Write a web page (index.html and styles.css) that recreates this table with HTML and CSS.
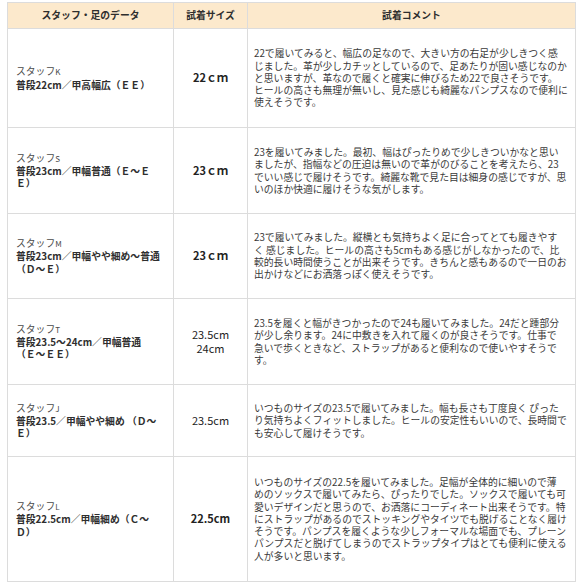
FILE: index.html
```html
<!DOCTYPE html>
<html lang="ja">
<head>
<meta charset="utf-8">
<link rel="stylesheet" href="styles.css">
</head>
<body>
<table class="fit-table">
  <colgroup>
    <col class="c-staff">
    <col class="c-size">
    <col class="c-comment">
  </colgroup>
  <thead>
    <tr class="head">
      <th>スタッフ・足のデータ</th>
      <th>試着サイズ</th>
      <th>試着コメント</th>
    </tr>
  </thead>
  <tbody>
    <tr class="r1">
      <td class="staff"><span class="name">スタッフ<span class="init">K</span></span><br><span class="foot">普段22cm／甲高幅広（ＥＥ）</span></td>
      <td class="size bold">22ｃｍ</td>
      <td class="comment">22で履いてみると、幅広の足なので、大きい方の右足が少しきつく感<br>じました。革が少しカチッとしているので、足あたりが固い感じなのか<br>と思いますが、革なので履くと確実に伸びるため22で良さそうです。<br>ヒールの高さも無理が無いし、見た感じも綺麗なパンプスなので便利に<br>使えそうです。</td>
    </tr>
    <tr class="r2">
      <td class="staff"><span class="name">スタッフ<span class="init">S</span></span><br><span class="foot">普段23cm／甲幅普通（Ｅ～Ｅ<br>Ｅ）</span></td>
      <td class="size bold">23ｃｍ</td>
      <td class="comment">23を履いてみました。最初、幅はぴったりめで少しきついかなと思い<br>ましたが、指幅などの圧迫は無いので革がのびることを考えたら、23<br>でいい感じで履けそうです。綺麗な靴で見た目は細身の感じですが、思<br>いのほか快適に履けそうな気がします。</td>
    </tr>
    <tr class="r3">
      <td class="staff"><span class="name">スタッフ<span class="init">M</span></span><br><span class="foot">普段23cm／甲幅やや細め～普通<br>（Ｄ～Ｅ）</span></td>
      <td class="size bold">23ｃｍ</td>
      <td class="comment">23で履いてみました。縦横とも気持ちよく足に合ってとても履きやす<br>く 感じました。ヒールの高さも5cmもある感じがしなかったので、比<br>較的長い時間使うことが出来そうです。きちんと感もあるので一日のお<br>出かけなどにお洒落っぽく使えそうです。</td>
    </tr>
    <tr class="r4">
      <td class="staff"><span class="name">スタッフ<span class="init">T</span></span><br><span class="foot">普段23.5～24cm／甲幅普通<br>（Ｅ～ＥＥ）</span></td>
      <td class="size">23.5cm<br>24cm</td>
      <td class="comment">23.5を履くと幅がきつかったので24も履いてみました。24だと踵部分<br>が少し余ります。24に中敷きを入れて履くのが良さそうです。仕事で<br>急いで歩くときなど、ストラップがあると便利なので使いやすそうで<br>す。</td>
    </tr>
    <tr class="r5">
      <td class="staff"><span class="name">スタッフ<span class="init">J</span></span><br><span class="foot">普段23.5／甲幅やや細め （Ｄ～<br>Ｅ）</span></td>
      <td class="size">23.5cm</td>
      <td class="comment">いつものサイズの23.5で履いてみました。幅も長さも丁度良く ぴった<br>り気持ちよくフィットしました。ヒールの安定性もいいので、長時間で<br>も安心して履けそうです。</td>
    </tr>
    <tr class="r6">
      <td class="staff"><span class="name">スタッフ<span class="init">L</span></span><br><span class="foot">普段22.5cm／甲幅細め（Ｃ～<br>Ｄ）</span></td>
      <td class="size bold">22.5cm</td>
      <td class="comment">いつものサイズの22.5を履いてみました。足幅が全体的に細いので薄<br>めのソックスで履いてみたら、ぴったりでした。ソックスで履いても可<br>愛いデザインだと思うので、お洒落にコーディネート出来そうです。特<br>にストラップがあるのでストッキングやタイツでも脱げることなく履け<br>そうです。パンプスを履くような少しフォーマルな場面でも、プレーン<br>パンプスだと脱げてしまうのでストラップタイプはとても便利に使える<br>人が多いと思います。</td>
    </tr>
  </tbody>
</table>
</body>
</html>
```

FILE: styles.css
```css
html, body {
  margin: 0;
  padding: 0;
  background: #ffffff;
}

body {
  font-family: "Noto Sans CJK JP", "Noto Sans", sans-serif;
  color: #3a3a3a;
}

.fit-table {
  margin: 2px 0 0 7px;
  width: 568px;
  border-collapse: collapse;
  table-layout: fixed;
  font-size: 9.8px;
  line-height: 12.3px;
}

.c-staff { width: 166px; }
.c-size { width: 74px; }
.c-comment { width: 328px; }

.fit-table th,
.fit-table td {
  border: 1px solid #dcdcdc;
  padding: 0;
  vertical-align: middle;
}

.head {
  height: 26px;
}

.head th {
  background: #fce9cc;
  color: #2e2e2e;
  font-weight: bold;
  text-align: center;
}

.r1 { height: 99px; }
.r2 { height: 86px; }
.r3 { height: 85px; }
.r4 { height: 86px; }
.r5 { height: 72px; }
.r6 { height: 125px; }

.fit-table td.staff {
  padding: 0 3px 0 8px;
  text-align: left;
}

.name {
  color: #4a4a4a;
}

.init {
  font-size: 8px;
}

.foot {
  color: #2e2e2e;
  font-weight: bold;
}

.fit-table td.size {
  text-align: center;
  font-size: 11px;
  line-height: 13.3px;
  color: #222222;
}

.fit-table td.bold {
  font-weight: bold;
}

.fit-table td.comment {
  padding: 0 2px 0 6px;
  text-align: left;
  white-space: nowrap;
}
```
